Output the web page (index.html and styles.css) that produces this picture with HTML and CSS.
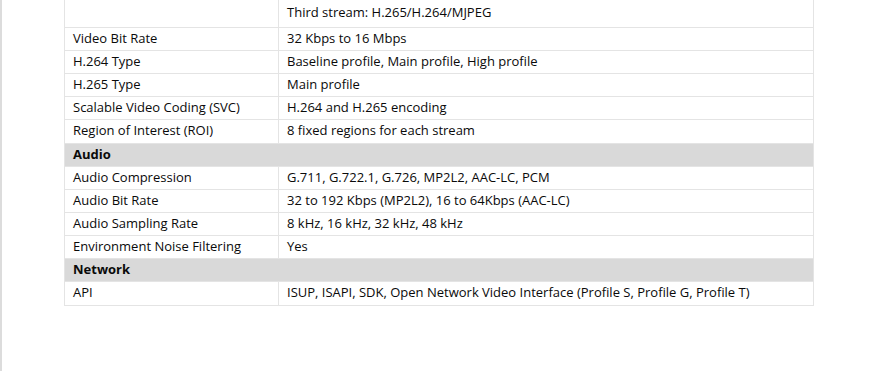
FILE: index.html
```html
<!DOCTYPE html>
<html lang="en">
<head>
<meta charset="utf-8">
<title>Specifications</title>
<link rel="stylesheet" href="styles.css">
</head>
<body>
<div class="page">
  <table class="spec">
    <colgroup><col class="c1"><col class="c2"></colgroup>
    <tbody>
      <tr class="first"><td></td><td>Third stream: H.265/H.264/MJPEG</td></tr>
      <tr><td>Video Bit Rate</td><td>32 Kbps to 16 Mbps</td></tr>
      <tr><td>H.264 Type</td><td>Baseline profile, Main profile, High profile</td></tr>
      <tr><td>H.265 Type</td><td>Main profile</td></tr>
      <tr><td>Scalable Video Coding (SVC)</td><td>H.264 and H.265 encoding</td></tr>
      <tr class="tall"><td>Region of Interest (ROI)</td><td>8 fixed regions for each stream</td></tr>
      <tr class="section"><td colspan="2">Audio</td></tr>
      <tr><td>Audio Compression</td><td>G.711, G.722.1, G.726, MP2L2, AAC-LC, PCM</td></tr>
      <tr><td>Audio Bit Rate</td><td>32 to 192 Kbps (MP2L2), 16 to 64Kbps (AAC-LC)</td></tr>
      <tr><td>Audio Sampling Rate</td><td>8 kHz, 16 kHz, 32 kHz, 48 kHz</td></tr>
      <tr><td>Environment Noise Filtering</td><td>Yes</td></tr>
      <tr class="section"><td colspan="2">Network</td></tr>
      <tr class="tall"><td>API</td><td>ISUP, ISAPI, SDK, Open Network Video Interface (Profile S, Profile G, Profile T)</td></tr>
    </tbody>
  </table>
</div>
</body>
</html>
```

FILE: styles.css
```css
html, body {
  margin: 0;
  padding: 0;
  background: #ffffff;
}
body {
  font-family: "Open Sans", "Liberation Sans", sans-serif;
  font-size: 13px;
  color: #0a0a0a;
}
.page {
  height: 371px;
  border-left: 2px solid #dcdcdc;
  padding-left: 62px;
  box-sizing: border-box;
}
.spec {
  border-collapse: collapse;
  width: 750px;
  table-layout: fixed;
}
.c1 { width: 214px; }
.spec td {
  border: 1px solid #e4e4e4;
  height: 23px;
  padding: 0 8px 2px;
  box-sizing: border-box;
  line-height: 20px;
  white-space: nowrap;
  vertical-align: middle;
}
.spec tr.tall td {
  height: 24px;
}
.spec tr.first td {
  border-top: none;
  height: 27px;
  padding: 0 8px 2px;
}
.spec tr.section td {
  background: #d9d9d9;
  font-weight: 700;
}
```
